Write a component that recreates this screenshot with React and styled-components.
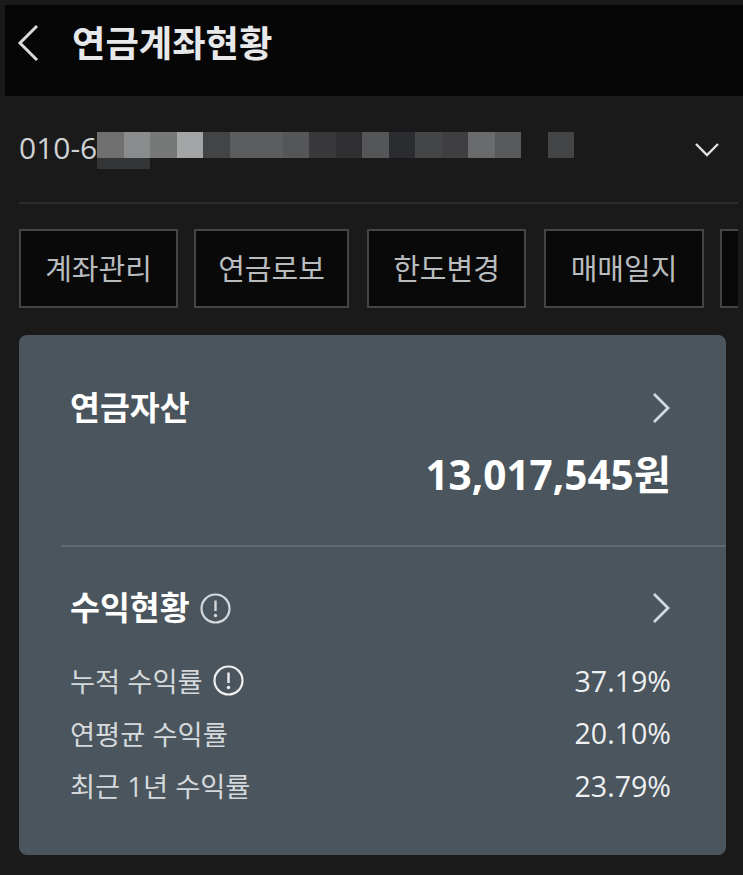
import React from "react";
import styled, { createGlobalStyle } from "styled-components";

const GlobalStyle = createGlobalStyle`
  html, body {
    margin: 0;
    padding: 0;
    background: #1a1a1a;
  }
  * {
    box-sizing: border-box;
  }
`;

const Page = styled.div`
  width: 743px;
  height: 875px;
  overflow: hidden;
  padding-top: 5px;
  background: #1a1a1a;
  font-family: "Open Sans", "Noto Sans CJK KR", "Noto Sans", sans-serif;
`;

const Header = styled.header`
  display: flex;
  align-items: center;
  height: 91px;
  margin-left: 5px;
  padding: 0 0 16px 12px;
  background: #060606;
`;

const BackIcon = styled.svg`
  display: block;
  width: 24px;
  height: 38px;
  margin-right: 31px;
`;

const Title = styled.h1`
  margin: 0;
  font-size: 36.3px;
  line-height: 48px;
  font-weight: 700;
  color: #e6e8ea;
`;

const AccountRow = styled.div`
  display: flex;
  height: 108px;
  margin: 0 5px 0 19px;
  padding-top: 36px;
  border-bottom: 2px solid #2c2d2e;
`;

const AccountNumber = styled.span`
  flex: none;
  width: 78px;
  margin-top: -1px;
  font-size: 30px;
  line-height: 34px;
  white-space: nowrap;
  color: #cfd2d4;
`;

const Mosaic = styled.div`
  width: 477px;
`;

const MosaicRow = styled.div`
  display: flex;
  height: ${(props) => props.$height}px;
`;

const MosaicCell = styled.div`
  width: 26.5px;
  background: ${(props) => props.$color};
`;

const ChevronDown = styled.svg`
  display: block;
  width: 26px;
  height: 16px;
  margin: 10px 18px 0 auto;
`;

const ChipRow = styled.div`
  display: flex;
  margin: 25px 5px 0 19px;
  overflow: hidden;
`;

const Chip = styled.div`
  flex: none;
  display: flex;
  align-items: center;
  justify-content: center;
  width: ${(props) => props.$width}px;
  height: 79px;
  margin-left: ${(props) => props.$gap}px;
  padding-bottom: 3px;
  border: 2px solid #454545;
  background: #090909;
  font-size: 29px;
  color: #b9bcbe;
`;

const Card = styled.section`
  width: 707px;
  height: 520px;
  margin: 27px 0 0 19px;
  padding: 0 0 0 42px;
  border-radius: 8px;
  background: #4b555d;
`;

const AssetBlock = styled.div`
  height: 212px;
  padding: 48px 55px 0 9px;
  border-bottom: 2px solid #5f6a73;
`;

const HeadRow = styled.div`
  display: flex;
  align-items: center;
  height: 50px;
`;

const HeadTitle = styled.h2`
  margin: 0;
  font-size: 32.5px;
  line-height: 50px;
  font-weight: 700;
  color: #ffffff;
`;

const ChevronRight = styled.svg`
  display: block;
  width: 20px;
  height: 34px;
  margin-left: auto;
`;

const Total = styled.div`
  margin-top: 17px;
  text-align: right;
  font-size: 40.5px;
  line-height: 50px;
  font-weight: 700;
  color: #ffffff;
`;

const ReturnBlock = styled.div`
  padding: 36px 55px 0 9px;
`;

const InfoIcon = styled.svg`
  display: block;
  flex: none;
  width: 31px;
  height: 31px;
  margin-left: ${(props) => props.$gap}px;
`;

const RateList = styled.div`
  margin-top: 21px;
`;

const RateRow = styled.div`
  display: flex;
  align-items: center;
  height: 52.5px;
  font-size: 27.3px;
  color: #d5d9dc;
`;

const RateLabel = styled.span`
  display: flex;
  align-items: center;
`;

const RateValue = styled.span`
  margin-left: auto;
  font-size: 28.6px;
  color: #eef0f1;
`;

const mosaicTop = [
  "#707070", "#8b8c8d", "#777878", "#a3a5a7", "#434446", "#5c5d5e", "#5c5d5e", "#555657", "#38383a",
  "#2f2f31", "#555657", "#2a2c2f", "#444546", "#3f3f41", "#6a6b6c", "#58595a", "#1a1a1a", "#434446",
];
const mosaicBottom = ["#333537", "#333537"];

const chips = [
  { label: "계좌관리", width: 159, gap: 0 },
  { label: "연금로보", width: 155, gap: 16 },
  { label: "한도변경", width: 159, gap: 18 },
  { label: "매매일지", width: 160, gap: 18 },
  { label: "", width: 60, gap: 16 },
];

const rates = [
  { label: "누적 수익률", value: "37.19%", info: true },
  { label: "연평균 수익률", value: "20.10%" },
  { label: "최근 1년 수익률", value: "23.79%" },
];

const Info = ({ gap, color }) => (
  <InfoIcon $gap={gap} viewBox="0 0 31 31" fill="none">
    <circle cx="15.5" cy="15.5" r="14" stroke={color} strokeWidth="2.2" />
    <path d="M15.5 7.5v10.5" stroke={color} strokeWidth="2.4" />
    <circle cx="15.5" cy="22.5" r="1.7" fill={color} />
  </InfoIcon>
);

const Chevron = () => (
  <ChevronRight viewBox="0 0 20 34" fill="none">
    <path d="M3 3l14 14L3 31" stroke="#d4d8db" strokeWidth="2.8" />
  </ChevronRight>
);

const App = () => {
  return (
    <Page>
      <GlobalStyle />
      <Header>
        <BackIcon viewBox="0 0 24 38" fill="none">
          <path d="M20 2L3 19l17 17" stroke="#d8dadc" strokeWidth="3" />
        </BackIcon>
        <Title>연금계좌현황</Title>
      </Header>
      <AccountRow>
        <AccountNumber>010-6</AccountNumber>
        <Mosaic>
          <MosaicRow $height={26}>
            {mosaicTop.map((color, i) => (
              <MosaicCell key={i} $color={color} />
            ))}
          </MosaicRow>
          <MosaicRow $height={11}>
            {mosaicBottom.map((color, i) => (
              <MosaicCell key={i} $color={color} />
            ))}
          </MosaicRow>
        </Mosaic>
        <ChevronDown viewBox="0 0 26 16" fill="none">
          <path d="M2 2l11 11L24 2" stroke="#dfe1e3" strokeWidth="2.4" />
        </ChevronDown>
      </AccountRow>
      <ChipRow>
        {chips.map((chip, i) => (
          <Chip key={i} $width={chip.width} $gap={chip.gap}>
            {chip.label}
          </Chip>
        ))}
      </ChipRow>
      <Card>
        <AssetBlock>
          <HeadRow>
            <HeadTitle>연금자산</HeadTitle>
            <Chevron />
          </HeadRow>
          <Total>13,017,545원</Total>
        </AssetBlock>
        <ReturnBlock>
          <HeadRow>
            <HeadTitle>수익현황</HeadTitle>
            <Info gap={10} color="#d5d9dc" />
            <Chevron />
          </HeadRow>
          <RateList>
            {rates.map((rate) => (
              <RateRow key={rate.label}>
                <RateLabel>
                  {rate.label}
                  {rate.info && <Info gap={10} color="#eef0f1" />}
                </RateLabel>
                <RateValue>{rate.value}</RateValue>
              </RateRow>
            ))}
          </RateList>
        </ReturnBlock>
      </Card>
    </Page>
  );
};

export default App;
